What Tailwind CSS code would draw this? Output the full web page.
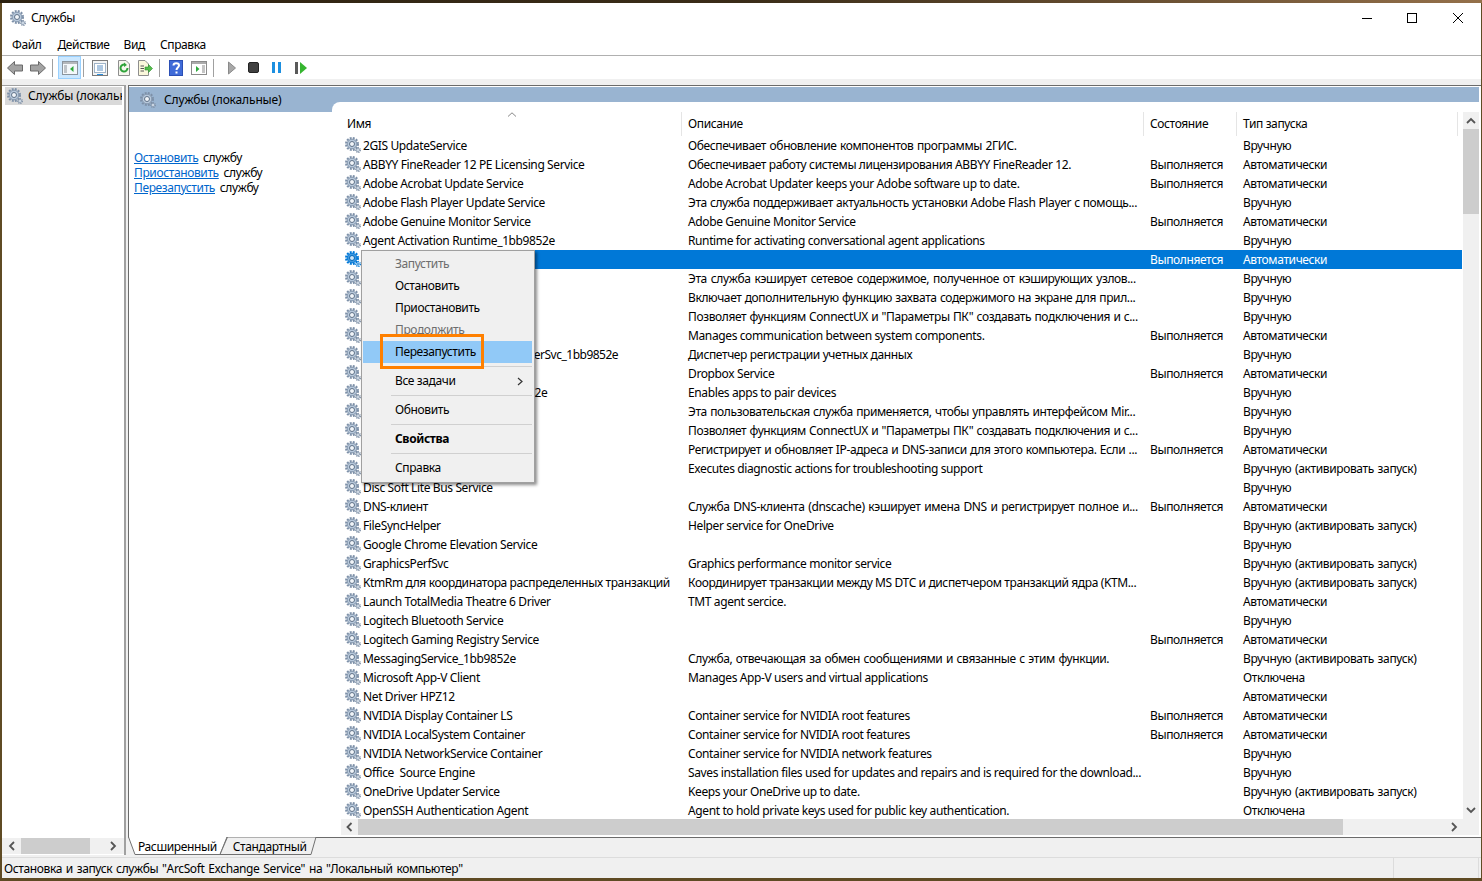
<!DOCTYPE html>
<html lang="ru">
<head>
<meta charset="utf-8">
<title>Службы</title>
<script src="https://cdn.jsdelivr.net/npm/@tailwindcss/browser@4"></script>
</head>
<body class="m-0">
<svg width="0" height="0" class="absolute">
  <defs>
    <symbol id="g" viewBox="0 0 16 16">
      <circle cx="7" cy="7" r="5.900" fill="none" stroke="#7d90a8" stroke-width="2.200" stroke-dasharray="1.900 1.200"/>
      <circle cx="7" cy="7" r="4.800" fill="#b7c8db" stroke="#8497ae" stroke-width="1"/>
      <circle cx="7" cy="7" r="2.500" fill="#f1f5f9" stroke="#5f7288" stroke-width="1"/>
      <circle cx="13" cy="13" r="2.300" fill="none" stroke="#8092a8" stroke-width="1.400" stroke-dasharray="1.100 .8"/>
      <circle cx="13" cy="13" r="1.600" fill="#d0dbe6" stroke="#8092a8" stroke-width=".6"/>
    </symbol>
    <symbol id="gs" viewBox="0 0 16 16">
      <circle cx="7" cy="7" r="5.900" fill="none" stroke="#0078d7" stroke-width="2.200" stroke-dasharray="1.900 1.200"/>
      <circle cx="7" cy="7" r="4.800" fill="#3f97de" stroke="#0078d7" stroke-width="1"/>
      <circle cx="7" cy="7" r="2.500" fill="#cfe5f7" stroke="#0067b8" stroke-width="1"/>
      <circle cx="13" cy="13" r="2.300" fill="none" stroke="#0078d7" stroke-width="1.400" stroke-dasharray="1.100 .8"/>
      <circle cx="13" cy="13" r="1.600" fill="#5aa6e3"/>
    </symbol>
  </defs>
</svg>
<div class="relative w-[1482px] h-[881px] overflow-hidden bg-[#5f4b24] pl-[2px] pr-[1px] pt-[3px] pb-[3px] font-['Noto_Sans',sans-serif] text-[12px] tracking-[-0.38px] text-black leading-[15px] whitespace-nowrap">
  <div class="absolute left-0 top-0 w-full h-[3px] bg-linear-to-r from-[#2c2110] via-[#3a2c18] to-[#94704a]"></div>
  <div class="relative flex flex-col h-full bg-[#f0f0f0]">
    <!-- title bar -->
    <div class="flex h-[30px] items-center bg-white pl-[8px]">
      <svg class="w-4 h-4"><use href="#g"/></svg>
      <span class="ml-[5px] mb-[2px]">Службы</span>
      <div class="ml-auto flex items-center">
        <svg class="w-[10px] h-[10px]" viewBox="0 0 10 10"><path d="M0 5.500H10" stroke="#000" fill="none"/></svg>
        <svg class="w-[10px] h-[10px] ml-[35px]" viewBox="0 0 10 10"><rect x=".5" y=".5" width="9" height="9" stroke="#000" fill="none"/></svg>
        <svg class="w-[10px] h-[10px] ml-[36px] mr-[18px]" viewBox="0 0 10 10"><path d="M0 0L10 10M10 0L0 10" stroke="#000" fill="none"/></svg>
      </div>
    </div>
    <!-- menu bar -->
    <div class="flex h-[22px] items-center bg-white border-b border-[#b0b0b0] pl-[10px] box-content">
      <span>Файл</span>
      <span class="ml-[16px]">Действие</span>
      <span class="ml-[14px]">Вид</span>
      <span class="ml-[15px]">Справка</span>
    </div>
    <!-- toolbar -->
    <div class="flex h-[23px] items-center bg-white pl-[5px]">
      <svg class="w-4 h-4" viewBox="0 0 16 16"><path d="M.5 8L7.500 1.500V5H15.500V11H7.500V14.500Z" fill="#a3a3a3" stroke="#6a6a6a"/></svg>
      <svg class="w-4 h-4 ml-[7px]" viewBox="0 0 16 16"><path d="M15.500 8L8.500 1.500V5H.5V11H8.500V14.500Z" fill="#a3a3a3" stroke="#6a6a6a"/></svg>
      <div class="w-px h-[18px] bg-[#a0a0a0] ml-[6px]"></div>
      <div class="flex items-center justify-center w-[23px] h-[23px] ml-[5px] bg-[#cce8ff] border border-[#99d1ff]">
        <svg class="w-4 h-[14px]" viewBox="0 0 16 14"><rect x=".5" y=".5" width="15" height="13" fill="#f4f8fb" stroke="#8b959e"/><path d="M1 1H15V3H1Z" fill="#b4b8bc"/><path d="M2 5H5M2 7H5M2 9H5M2 11H5" stroke="#8a9299"/><path d="M11.500 5V11L8 8Z" fill="#2eaa3c"/></svg>
      </div>
      <div class="w-px h-[18px] bg-[#a0a0a0] ml-[2px]"></div>
      <svg class="w-4 h-4 ml-[8px]" viewBox="0 0 16 16"><rect x=".5" y=".5" width="15" height="15" fill="#f4f4f4" stroke="#7b7b7b"/><rect x="2.500" y="3.500" width="11" height="9" fill="#fff" stroke="#a0b4c8"/><path d="M5 6H11M5 8H11M5 10H11" stroke="#5a8fc4"/><path d="M5 14H11V15H5Z" fill="#2a8fe0"/></svg>
      <svg class="w-4 h-4 ml-[8px]" viewBox="0 0 16 16"><path d="M2.500.5H10L13.500 4V15.500H2.500Z" fill="#f6f6ee" stroke="#8e8e8e"/><path d="M11.500 8A3.500 3.500 0 1 1 9 4.700" fill="none" stroke="#2fa33a" stroke-width="2"/><path d="M8 2.500L11 5L8 7Z" fill="#2fa33a"/></svg>
      <svg class="w-4 h-4 ml-[5px]" viewBox="0 0 16 16"><path d="M1.500.5H8L11.500 4V15.500H1.500Z" fill="#fbf8dc" stroke="#8e8e8e"/><path d="M3.500 6H7M3.500 8.500H7M3.500 11H7" stroke="#555"/><path d="M8 7H11.500V4.500L15.500 8.500L11.500 12.500V10H8Z" fill="#53bd4a" stroke="#2f8f2f" stroke-width=".6"/></svg>
      <div class="w-px h-[18px] bg-[#a0a0a0] ml-[6px]"></div>
      <svg class="w-[14px] h-4 ml-[9px]" viewBox="0 0 14 16"><rect width="14" height="16" fill="#2b4fb5"/><rect x="1" y="1" width="12" height="14" fill="#3f6bd8"/><path d="M4.500 5.500C4.500 2.500 10 2.500 10 5.500C10 7.500 7.500 7.500 7.500 10" fill="none" stroke="#fff" stroke-width="2"/><rect x="6.500" y="11.500" width="2" height="2" fill="#fff"/></svg>
      <svg class="w-4 h-[14px] ml-[8px]" viewBox="0 0 16 14"><rect x=".5" y=".5" width="15" height="13" fill="#fff" stroke="#8b8b8b"/><path d="M1 1H15V3H1Z" fill="#ababab"/><path d="M11 5H14M11 7H14M11 9H14M11 11H14" stroke="#8a8a8a"/><path d="M5 5V11L8.500 8Z" fill="#2eaa3c"/></svg>
      <div class="w-px h-[18px] bg-[#a0a0a0] ml-[6px]"></div>
      <svg class="w-[8px] h-[14px] ml-[14px]" viewBox="0 0 8 14"><path d="M.5 1V13L7.500 7Z" fill="#a8a8a8" stroke="#8a8a8a"/></svg>
      <svg class="w-[11px] h-[11px] ml-[12px]" viewBox="0 0 11 11"><rect x=".5" y=".5" width="10" height="10" rx="1.500" fill="#404040" stroke="#222"/></svg>
      <svg class="w-[9px] h-[11px] ml-[13px]" viewBox="0 0 9 11"><rect width="3" height="11" fill="#1c8fe0"/><rect x="6" width="3" height="11" fill="#1c8fe0"/></svg>
      <svg class="w-[12px] h-[12px] ml-[14px]" viewBox="0 0 12 12"><rect width="3" height="12" fill="#5a5a5a"/><path d="M5 0V12L12 6Z" fill="#35b52f"/></svg>
    </div>
    <div class="h-[6px]"></div>
    <!-- panes -->
    <div class="flex flex-1 min-h-0">
      <!-- tree pane -->
      <div class="flex flex-col w-[122px] h-[769px] bg-white border-t border-t-[#a0a0a0] border-r-2 border-r-[#a0a0a0] box-content">
        <div class="flex-1 pl-[3px] pt-px min-h-0">
          <div class="flex items-center h-[18px] w-[117px] bg-[#d9d9d9] overflow-hidden pl-[2px]">
            <svg class="w-4 h-4 shrink-0"><use href="#g"/></svg>
            <span class="ml-[5px] mb-[2px] tracking-[-0.15px]">Службы (локальные)</span>
          </div>
        </div>
        <div class="flex items-center h-[16px] bg-[#f0f0f0] mb-[1px]">
          <svg class="w-[16px] h-[16px] ml-[2px]" viewBox="0 0 16 16"><path d="M10 4L6 8L10 12" fill="none" stroke="#555" stroke-width="1.800"/></svg>
          <div class="w-[69px] h-full bg-[#cdcdcd] ml-[1px]"></div>
          <svg class="w-[16px] h-[16px] ml-[15px]" viewBox="0 0 16 16"><path d="M6 4L10 8L6 12" fill="none" stroke="#555" stroke-width="1.800"/></svg>
        </div>
      </div>
      <!-- right pane -->
      <div class="flex flex-col flex-1 min-w-0 ml-[2px]">
        <div class="flex flex-col h-[752px] bg-white border-l border-[#6b6b6b] border-t pt-[1px] pr-[2px]">
          <div class="relative flex-1 flex min-h-0">
            <!-- action column -->
            <div class="w-[203px] shrink-0">
              <div class="flex items-center h-[25px] bg-[#99b4d1] pl-[11px]">
                <svg class="w-4 h-4 shrink-0"><use href="#g"/></svg>
                <span class="ml-[8px] tracking-[-0.15px]">Службы (локальные)</span>
              </div>
              <div class="pl-[5px] pt-[38px] [word-spacing:2px]">
                <div><a class="text-[#0066cc] underline">Остановить</a> службу</div>
                <div><a class="text-[#0066cc] underline">Приостановить</a> службу</div>
                <div><a class="text-[#0066cc] underline">Перезапустить</a> службу</div>
              </div>
            </div>
            <!-- list column -->
            <div class="flex-1 min-w-0 flex flex-col bg-[#99b4d1]">
              <div class="h-[15px] shrink-0"></div>
              <div class="flex-1 min-h-0 bg-white rounded-tl-[8px] flex flex-col">
                <div class="flex flex-1 min-h-0">
                  <div class="w-[1131px] flex flex-col min-w-0 overflow-hidden pl-[13px]">
                    <div class="relative flex shrink-0 h-[34px] pt-[10px]">
                      <div class="w-[337px] shrink-0 pl-[2px] border-r border-[#e5e5e5] h-[24px] pt-[4px]">Имя</div>
                      <div class="w-[462px] pl-[6px] border-r border-[#e5e5e5] h-[24px] pt-[4px] shrink-0">Описание</div>
                      <div class="w-[93px] pl-[6px] border-r border-[#e5e5e5] h-[24px] pt-[4px] shrink-0">Состояние</div>
                      <div class="w-[221px] pl-[6px] border-r border-[#e5e5e5] h-[24px] pt-[4px] shrink-0">Тип запуска</div>
                      <svg class="absolute left-[162px] top-[10px] w-[10px] h-[5px]" viewBox="0 0 10 5"><path d="M1 4.500L5 .8L9 4.500" fill="none" stroke="#888"/></svg>
                    </div>
                    <div class="w-[1117px] leading-[19px]">
                      <div class="grid grid-cols-[18px_325px_462px_93px_1fr] h-[19px]"><svg class="w-4 h-4 mt-[1px]"><use href="#g"/></svg><div>2GIS UpdateService</div><div class="[word-spacing:0.8px]">Обеспечивает обновление компонентов программы 2ГИС.</div><div></div><div>Вручную</div></div>
                      <div class="grid grid-cols-[18px_325px_462px_93px_1fr] h-[19px]"><svg class="w-4 h-4 mt-[1px]"><use href="#g"/></svg><div>ABBYY FineReader 12 PE Licensing Service</div><div>Обеспечивает работу системы лицензирования ABBYY FineReader 12.</div><div>Выполняется</div><div>Автоматически</div></div>
                      <div class="grid grid-cols-[18px_325px_462px_93px_1fr] h-[19px]"><svg class="w-4 h-4 mt-[1px]"><use href="#g"/></svg><div>Adobe Acrobat Update Service</div><div>Adobe Acrobat Updater keeps your Adobe software up to date.</div><div>Выполняется</div><div>Автоматически</div></div>
                      <div class="grid grid-cols-[18px_325px_462px_93px_1fr] h-[19px]"><svg class="w-4 h-4 mt-[1px]"><use href="#g"/></svg><div>Adobe Flash Player Update Service</div><div class="[word-spacing:0.3px]">Эта служба поддерживает актуальность установки Adobe Flash Player с помощь...</div><div></div><div>Вручную</div></div>
                      <div class="grid grid-cols-[18px_325px_462px_93px_1fr] h-[19px]"><svg class="w-4 h-4 mt-[1px]"><use href="#g"/></svg><div>Adobe Genuine Monitor Service</div><div>Adobe Genuine Monitor Service</div><div>Выполняется</div><div>Автоматически</div></div>
                      <div class="grid grid-cols-[18px_325px_462px_93px_1fr] h-[19px]"><svg class="w-4 h-4 mt-[1px]"><use href="#g"/></svg><div>Agent Activation Runtime_1bb9852e</div><div>Runtime for activating conversational agent applications</div><div></div><div>Вручную</div></div>
                      <div class="grid grid-cols-[18px_325px_462px_93px_1fr] h-[19px] text-white"><svg class="w-4 h-4 mt-[1px]"><use href="#gs"/></svg><div class="bg-[#0078d7]">ArcSoft Exchange Service</div><div class="bg-[#0078d7]"></div><div class="bg-[#0078d7]">Выполняется</div><div class="bg-[#0078d7]">Автоматически</div></div>
                      <div class="grid grid-cols-[18px_325px_462px_93px_1fr] h-[19px]"><svg class="w-4 h-4 mt-[1px]"><use href="#g"/></svg><div>BranchCache</div><div class="[word-spacing:1.2px]">Эта служба кэширует сетевое содержимое, полученное от кэширующих узлов...</div><div></div><div>Вручную</div></div>
                      <div class="grid grid-cols-[18px_325px_462px_93px_1fr] h-[19px]"><svg class="w-4 h-4 mt-[1px]"><use href="#g"/></svg><div>CaptureService_1bb9852e</div><div class="[word-spacing:0.5px]">Включает дополнительную функцию захвата содержимого на экране для прил...</div><div></div><div>Вручную</div></div>
                      <div class="grid grid-cols-[18px_325px_462px_93px_1fr] h-[19px]"><svg class="w-4 h-4 mt-[1px]"><use href="#g"/></svg><div>ConsentUX_1bb9852e</div><div class="[word-spacing:0.5px]">Позволяет функциям ConnectUX и "Параметры ПК" создавать подключения и с...</div><div></div><div>Вручную</div></div>
                      <div class="grid grid-cols-[18px_325px_462px_93px_1fr] h-[19px]"><svg class="w-4 h-4 mt-[1px]"><use href="#g"/></svg><div>CoreMessaging</div><div>Manages communication between system components.</div><div>Выполняется</div><div>Автоматически</div></div>
                      <div class="grid grid-cols-[18px_325px_462px_93px_1fr] h-[19px]"><svg class="w-4 h-4 mt-[1px]"><use href="#g"/></svg><div class="tracking-[-0.5px]">CredentialEnrollmentManagerUserSvc_1bb9852e</div><div>Диспетчер регистрации учетных данных</div><div></div><div>Вручную</div></div>
                      <div class="grid grid-cols-[18px_325px_462px_93px_1fr] h-[19px]"><svg class="w-4 h-4 mt-[1px]"><use href="#g"/></svg><div>Dropbox Service</div><div>Dropbox Service</div><div>Выполняется</div><div>Автоматически</div></div>
                      <div class="grid grid-cols-[18px_325px_462px_93px_1fr] h-[19px]"><svg class="w-4 h-4 mt-[1px]"><use href="#g"/></svg><div class="tracking-[-0.5px]">DeviceAssociationBroker_1bb9852e</div><div>Enables apps to pair devices</div><div></div><div>Вручную</div></div>
                      <div class="grid grid-cols-[18px_325px_462px_93px_1fr] h-[19px]"><svg class="w-4 h-4 mt-[1px]"><use href="#g"/></svg><div>DevicePicker</div><div class="[word-spacing:0.6px]">Эта пользовательская служба применяется, чтобы управлять интерфейсом Mir...</div><div></div><div>Вручную</div></div>
                      <div class="grid grid-cols-[18px_325px_462px_93px_1fr] h-[19px]"><svg class="w-4 h-4 mt-[1px]"><use href="#g"/></svg><div>DevicesFlow</div><div class="[word-spacing:0.5px]">Позволяет функциям ConnectUX и "Параметры ПК" создавать подключения и с...</div><div></div><div>Вручную</div></div>
                      <div class="grid grid-cols-[18px_325px_462px_93px_1fr] h-[19px]"><svg class="w-4 h-4 mt-[1px]"><use href="#g"/></svg><div>DHCP-клиент</div><div class="[word-spacing:0.5px]">Регистрирует и обновляет IP-адреса и DNS-записи для этого компьютера. Если ...</div><div>Выполняется</div><div>Автоматически</div></div>
                      <div class="grid grid-cols-[18px_325px_462px_93px_1fr] h-[19px]"><svg class="w-4 h-4 mt-[1px]"><use href="#g"/></svg><div>Diagnostic Execution</div><div>Executes diagnostic actions for troubleshooting support</div><div></div><div class="[word-spacing:1px]">Вручную (активировать запуск)</div></div>
                      <div class="grid grid-cols-[18px_325px_462px_93px_1fr] h-[19px]"><svg class="w-4 h-4 mt-[1px]"><use href="#g"/></svg><div>Disc Soft Lite Bus Service</div><div></div><div></div><div>Вручную</div></div>
                      <div class="grid grid-cols-[18px_325px_462px_93px_1fr] h-[19px]"><svg class="w-4 h-4 mt-[1px]"><use href="#g"/></svg><div>DNS-клиент</div><div class="[word-spacing:1px]">Служба DNS-клиента (dnscache) кэширует имена DNS и регистрирует полное и...</div><div>Выполняется</div><div>Автоматически</div></div>
                      <div class="grid grid-cols-[18px_325px_462px_93px_1fr] h-[19px]"><svg class="w-4 h-4 mt-[1px]"><use href="#g"/></svg><div>FileSyncHelper</div><div>Helper service for OneDrive</div><div></div><div class="[word-spacing:1px]">Вручную (активировать запуск)</div></div>
                      <div class="grid grid-cols-[18px_325px_462px_93px_1fr] h-[19px]"><svg class="w-4 h-4 mt-[1px]"><use href="#g"/></svg><div>Google Chrome Elevation Service</div><div></div><div></div><div>Вручную</div></div>
                      <div class="grid grid-cols-[18px_325px_462px_93px_1fr] h-[19px]"><svg class="w-4 h-4 mt-[1px]"><use href="#g"/></svg><div>GraphicsPerfSvc</div><div>Graphics performance monitor service</div><div></div><div class="[word-spacing:1px]">Вручную (активировать запуск)</div></div>
                      <div class="grid grid-cols-[18px_325px_462px_93px_1fr] h-[19px]"><svg class="w-4 h-4 mt-[1px]"><use href="#g"/></svg><div>KtmRm для координатора распределенных транзакций</div><div>Координирует транзакции между MS DTC и диспетчером транзакций ядра (KTM...</div><div></div><div class="[word-spacing:1px]">Вручную (активировать запуск)</div></div>
                      <div class="grid grid-cols-[18px_325px_462px_93px_1fr] h-[19px]"><svg class="w-4 h-4 mt-[1px]"><use href="#g"/></svg><div>Launch TotalMedia Theatre 6 Driver</div><div>TMT agent sercice.</div><div></div><div>Автоматически</div></div>
                      <div class="grid grid-cols-[18px_325px_462px_93px_1fr] h-[19px]"><svg class="w-4 h-4 mt-[1px]"><use href="#g"/></svg><div>Logitech Bluetooth Service</div><div></div><div></div><div>Вручную</div></div>
                      <div class="grid grid-cols-[18px_325px_462px_93px_1fr] h-[19px]"><svg class="w-4 h-4 mt-[1px]"><use href="#g"/></svg><div>Logitech Gaming Registry Service</div><div></div><div>Выполняется</div><div>Автоматически</div></div>
                      <div class="grid grid-cols-[18px_325px_462px_93px_1fr] h-[19px]"><svg class="w-4 h-4 mt-[1px]"><use href="#g"/></svg><div>MessagingService_1bb9852e</div><div class="[word-spacing:0.8px]">Служба, отвечающая за обмен сообщениями и связанные с этим функции.</div><div></div><div class="[word-spacing:1px]">Вручную (активировать запуск)</div></div>
                      <div class="grid grid-cols-[18px_325px_462px_93px_1fr] h-[19px]"><svg class="w-4 h-4 mt-[1px]"><use href="#g"/></svg><div>Microsoft App-V Client</div><div>Manages App-V users and virtual applications</div><div></div><div>Отключена</div></div>
                      <div class="grid grid-cols-[18px_325px_462px_93px_1fr] h-[19px]"><svg class="w-4 h-4 mt-[1px]"><use href="#g"/></svg><div>Net Driver HPZ12</div><div></div><div></div><div>Автоматически</div></div>
                      <div class="grid grid-cols-[18px_325px_462px_93px_1fr] h-[19px]"><svg class="w-4 h-4 mt-[1px]"><use href="#g"/></svg><div>NVIDIA Display Container LS</div><div>Container service for NVIDIA root features</div><div>Выполняется</div><div>Автоматически</div></div>
                      <div class="grid grid-cols-[18px_325px_462px_93px_1fr] h-[19px]"><svg class="w-4 h-4 mt-[1px]"><use href="#g"/></svg><div>NVIDIA LocalSystem Container</div><div>Container service for NVIDIA root features</div><div>Выполняется</div><div>Автоматически</div></div>
                      <div class="grid grid-cols-[18px_325px_462px_93px_1fr] h-[19px]"><svg class="w-4 h-4 mt-[1px]"><use href="#g"/></svg><div>NVIDIA NetworkService Container</div><div>Container service for NVIDIA network features</div><div></div><div>Вручную</div></div>
                      <div class="grid grid-cols-[18px_325px_462px_93px_1fr] h-[19px]"><svg class="w-4 h-4 mt-[1px]"><use href="#g"/></svg><div class="whitespace-pre">Office  Source Engine</div><div>Saves installation files used for updates and repairs and is required for the download...</div><div></div><div>Вручную</div></div>
                      <div class="grid grid-cols-[18px_325px_462px_93px_1fr] h-[19px]"><svg class="w-4 h-4 mt-[1px]"><use href="#g"/></svg><div>OneDrive Updater Service</div><div>Keeps your OneDrive up to date.</div><div></div><div class="[word-spacing:1px]">Вручную (активировать запуск)</div></div>
                      <div class="grid grid-cols-[18px_325px_462px_93px_1fr] h-[19px]"><svg class="w-4 h-4 mt-[1px]"><use href="#g"/></svg><div>OpenSSH Authentication Agent</div><div>Agent to hold private keys used for public key authentication.</div><div></div><div>Отключена</div></div>
                    </div>
                  </div>
                  <!-- vertical scrollbar -->
                  <div class="w-[16px] shrink-0 flex flex-col bg-[#f0f0f0] mt-[10px]">
                    <svg class="w-4 h-[17px]" viewBox="0 0 16 17"><path d="M4 11L8 7L12 11" fill="none" stroke="#555" stroke-width="1.800"/></svg>
                    <div class="h-[85px] bg-[#cdcdcd]"></div>
                    <svg class="w-4 h-[16px] mt-auto" viewBox="0 0 16 16"><path d="M4 5L8 9L12 5" fill="none" stroke="#555" stroke-width="1.800"/></svg>
                  </div>
                </div>
                <!-- horizontal scrollbar -->
                <div class="flex h-[16px] shrink-0 ml-[9px] bg-[#f0f0f0] mb-[2px]">
                  <svg class="w-[17px] h-4 shrink-0" viewBox="0 0 17 16"><path d="M10.500 4L6.500 8L10.500 12" fill="none" stroke="#555" stroke-width="1.800"/></svg>
                  <div class="w-[985px] bg-[#cdcdcd]"></div>
                  <svg class="w-[14px] h-4 shrink-0 ml-auto mr-[18px]" viewBox="0 0 14 16"><path d="M5 4L9 8L5 12" fill="none" stroke="#555" stroke-width="1.800"/></svg>
                </div>
              </div>
            </div>
          </div>
        </div>
        <!-- tabs -->
        <div class="relative flex h-[19px] border-t border-[#6b6b6b] bg-[#f0f0f0] box-border">
          <svg class="absolute left-0 -top-px w-[190px] h-[19px]" viewBox="0 0 190 19"><path d="M.5 0L7 17.500H92L99 0" fill="#fff" stroke="#707070"/><path d="M92 17.500L99.500 0H188L183 17.500Z" fill="#f0f0f0" stroke="#707070"/></svg>
          <span class="relative ml-[10px] mt-[1px]">Расширенный</span>
          <span class="relative ml-[16px] mt-[1px]">Стандартный</span>
        </div>
      </div>
    </div>
    <!-- status bar -->
    <div class="flex h-[21px] shrink-0 items-center bg-[#f0f0f0] border-t border-[#dcdcdc] pl-[2px]">
      <span class="[word-spacing:1.1px]">Остановка и запуск службы "ArcSoft Exchange Service" на "Локальный компьютер"</span>
      <div class="ml-auto w-px h-full bg-[#dcdcdc]"></div>
      <div class="ml-[84px] w-px h-full bg-[#dcdcdc] mr-[2px]"></div>
    </div>
  </div>
  <!-- context menu -->
  <div class="absolute left-[361px] top-[250px] w-[174px] h-[233px] bg-[#f0f0f0] border border-[#a0a0a0] shadow-[2px_2px_3px_rgba(0,0,0,0.45)] pt-[2px] pl-[1px] pr-[2px] leading-[22px]">
    <div class="h-[22px] pl-[32px] text-[#6d6d6d]">Запустить</div>
    <div class="h-[22px] pl-[32px]">Остановить</div>
    <div class="h-[22px] pl-[32px]">Приостановить</div>
    <div class="h-[22px] pl-[32px] text-[#6d6d6d]">Продолжить</div>
    <div class="h-[22px] pl-[32px] bg-[#91c9f7]">Перезапустить</div>
    <div class="h-[7px] pt-[3px] ml-[28px]"><div class="h-px bg-[#d0d0d0]"></div></div>
    <div class="relative h-[22px] pl-[32px]">Все задачи<svg class="absolute right-[9px] top-[7px] w-[6px] h-[9px]" viewBox="0 0 6 9"><path d="M1 1L5 4.500L1 8" fill="none" stroke="#333" stroke-width="1.200"/></svg></div>
    <div class="h-[7px] pt-[3px] ml-[28px]"><div class="h-px bg-[#d0d0d0]"></div></div>
    <div class="h-[22px] pl-[32px]">Обновить</div>
    <div class="h-[7px] pt-[3px] ml-[28px]"><div class="h-px bg-[#d0d0d0]"></div></div>
    <div class="h-[22px] pl-[32px] font-bold">Свойства</div>
    <div class="h-[7px] pt-[3px] ml-[28px]"><div class="h-px bg-[#d0d0d0]"></div></div>
    <div class="h-[22px] pl-[32px]">Справка</div>
  </div>
  <!-- orange callout -->
  <div class="absolute left-[380px] top-[334px] w-[104px] h-[35px] border-[3px] border-[#ff8000]"></div>
</div>
</body>
</html>
